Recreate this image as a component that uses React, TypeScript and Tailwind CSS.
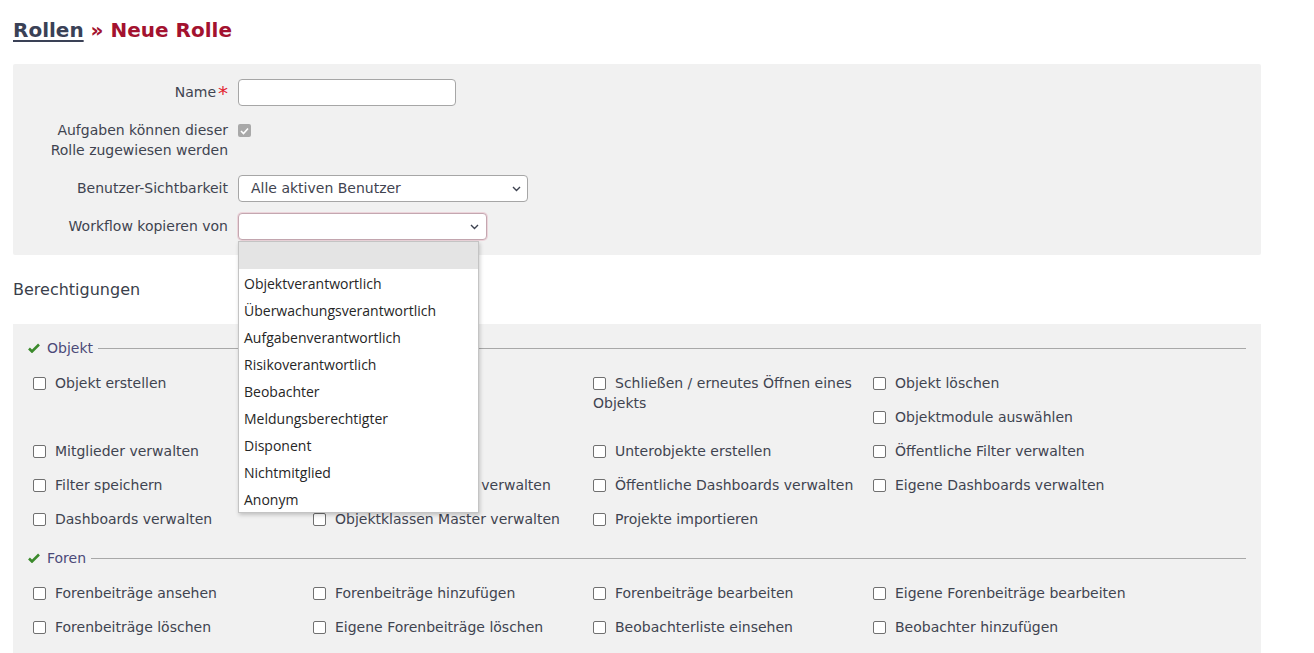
import React from "react";

const objektItems = [
  "Objekt erstellen",
  "Objekt bearbeiten",
  "Schließen / erneutes Öffnen eines Objekts",
  "Objekt löschen",
  "Objektmodule auswählen",
  "Mitglieder verwalten",
  "Mitglieder ansehen",
  "Unterobjekte erstellen",
  "Öffentliche Filter verwalten",
  "Filter speichern",
  "Dashboard-Vorlagen verwalten",
  "Öffentliche Dashboards verwalten",
  "Eigene Dashboards verwalten",
  "Dashboards verwalten",
  "Objektklassen Master verwalten",
  "Projekte importieren",
];

const forenItems = [
  "Forenbeiträge ansehen",
  "Forenbeiträge hinzufügen",
  "Forenbeiträge bearbeiten",
  "Eigene Forenbeiträge bearbeiten",
  "Forenbeiträge löschen",
  "Eigene Forenbeiträge löschen",
  "Beobachterliste einsehen",
  "Beobachter hinzufügen",
];

const roles = [
  "Objektverantwortlich",
  "Überwachungsverantwortlich",
  "Aufgabenverantwortlich",
  "Risikoverantwortlich",
  "Beobachter",
  "Meldungsberechtigter",
  "Disponent",
  "Nichtmitglied",
  "Anonym",
];

const Chevron = () => (
  <svg width="9" height="6" viewBox="0 0 9 6" className="shrink-0">
    <path d="M1 1l3.5 3.5L8 1" fill="none" stroke="#3d4250" strokeWidth="1.4" />
  </svg>
);

const Check = () => (
  <svg width="12" height="10" viewBox="0 0 12 10" className="shrink-0">
    <path d="M1 5.5l3 3L11 1.5" fill="none" stroke="#3b8a2c" strokeWidth="2.6" />
  </svg>
);

const Legend = ({ title }: { title: string }) => (
  <div className="flex items-center h-5">
    <Check />
    <span className="ml-[7px] text-[#4b4a78]">{title}</span>
    <div className="flex-1 h-px bg-[#a8a8a8] ml-[5px]" />
  </div>
);

const Item = ({ label }: { label: string }) => (
  <div className="float-left w-[280px] pb-[14px] leading-5">
    <span className="inline-block w-[13px] h-[13px] border border-[#707070] rounded-[2px] bg-white align-[-2px] mr-[9px]" />
    {label}
  </div>
);

const App = () => {
  return (
    <div
      className="min-h-[653px] bg-white text-[14px] text-[#3f4450] px-[13px] pt-4"
      style={{ fontFamily: '"DejaVu Sans", Verdana, sans-serif' }}
    >
      <h1 className="text-[20px] font-bold leading-7">
        <a className="underline text-[#3a4156] decoration-2 underline-offset-[3px]">Rollen</a>
        <span className="text-[#a3122f]"> » Neue Rolle</span>
      </h1>

      <div className="w-[1248px] mt-5 bg-[#f1f1f1] rounded-[2px] py-[15px]">
        <div className="flex items-center gap-[10px]">
          <label className="w-[215px] text-right">
            Name<span className="text-[#e3212f] text-[20px] leading-none align-[-3px] ml-[2px]">*</span>
          </label>
          <div className="w-[218px] h-[27px] bg-white border border-[#a6a6a6] rounded-[4px]" />
        </div>

        <div className="flex items-start gap-[10px] mt-[14px] leading-5">
          <label className="w-[215px] text-right">
            Aufgaben können dieser
            <br />
            Rolle zugewiesen werden
          </label>
          <span className="mt-1 w-[13px] h-[13px] rounded-[2px] bg-[#a9a9a9] flex items-center justify-center">
            <svg width="9" height="8" viewBox="0 0 9 8">
              <path d="M1 4l2.5 2.5L8 1.5" fill="none" stroke="white" strokeWidth="1.6" />
            </svg>
          </span>
        </div>

        <div className="flex items-center gap-[10px] mt-[15px]">
          <label className="w-[215px] text-right">Benutzer-Sichtbarkeit</label>
          <div className="w-[290px] h-[27px] bg-white border border-[#a6a6a6] rounded-[4px] flex items-center justify-between pl-3 pr-[6px]">
            <span>Alle aktiven Benutzer</span>
            <Chevron />
          </div>
        </div>

        <div className="flex items-center gap-[10px] mt-[11px]">
          <label className="w-[215px] text-right">Workflow kopieren von</label>
          <div className="relative">
            <div className="w-[249px] h-[27px] bg-white border border-[#c4a7b0] rounded-[4px] ring-1 ring-[#ecd5db] flex items-center justify-end pr-[7px]">
              <Chevron />
            </div>
            <div
              className="absolute left-0 top-[28px] w-[241px] bg-white border border-[#c4c4c4] shadow-[1px_2px_4px_rgba(0,0,0,0.2)] z-10 text-[14px] text-[#262626]"
              style={{ fontFamily: '"Open Sans", "Noto Sans", sans-serif' }}
            >
              <div className="h-[27px] bg-[#e4e4e4]" />
              {roles.map((r) => (
                <div key={r} className="h-[27px] flex items-center px-[5px] pt-[2px]">
                  {r}
                </div>
              ))}
            </div>
          </div>
        </div>
      </div>

      <h2 className="text-[16px] leading-5 mt-[25px] text-[#3a3f4b]">Berechtigungen</h2>

      <div className="w-[1248px] mt-[24px] bg-[#f1f1f1] pt-[14px] px-[15px] pb-1">
        <Legend title="Objekt" />
        <div className="flow-root pl-[5px] mt-[15px]">
          {objektItems.map((l) => (
            <Item key={l} label={l} />
          ))}
        </div>
        <div className="mt-[5px]">
          <Legend title="Foren" />
        </div>
        <div className="flow-root pl-[5px] mt-[15px]">
          {forenItems.map((l) => (
            <Item key={l} label={l} />
          ))}
        </div>
      </div>
    </div>
  );
};

export default App;
